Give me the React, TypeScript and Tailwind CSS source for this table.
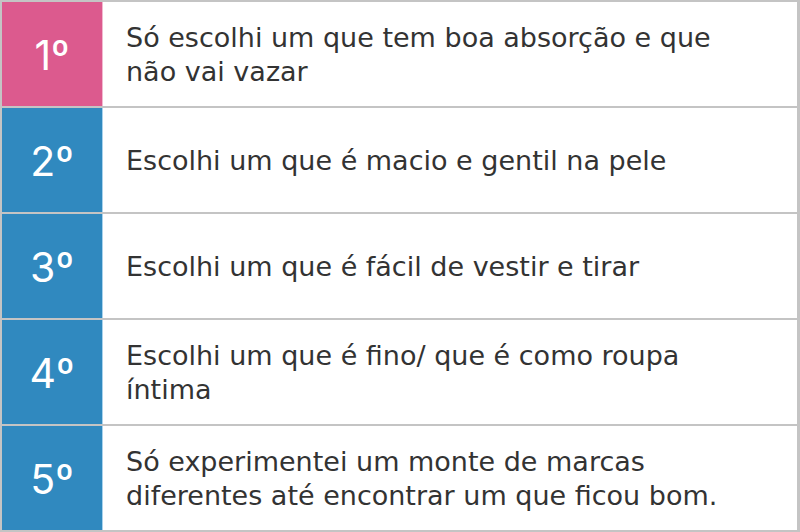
const rows = [
  { n: '1º', text: 'Só escolhi um que tem boa absorção e que não vai vazar', pink: true },
  { n: '2º', text: 'Escolhi um que é macio e gentil na pele' },
  { n: '3º', text: 'Escolhi um que é fácil de vestir e tirar' },
  { n: '4º', text: 'Escolhi um que é fino/ que é como roupa íntima' },
  { n: '5º', text: 'Só experimentei um monte de marcas diferentes até encontrar um que ficou bom.' },
];

export default function App() {
  return (
    <div className="w-[800px] h-[532px] bg-white" style={{ fontFamily: '"DejaVu Sans", sans-serif' }}>
      <div className="flex flex-col gap-[2px] bg-[#c4c4c4] p-[2px] pr-[3px] h-full">
        {rows.map((r) => (
          <div key={r.n} className="flex h-[104px] bg-white">
            <div
              className={`w-[101px] flex items-center justify-center pt-[4px] text-white text-[41px] font-['Inter',sans-serif] border-r ${
                r.pink ? 'bg-[#dc5a8e] border-[#f1b9d0]' : 'bg-[#3089bf] border-[#a9d2ec]'
              }`}
            >
              {r.n}
            </div>
            <div className="flex-1 flex items-center pl-[23px] pr-[40px] pt-[2px] text-[#333] text-[27px] leading-[34px]">
              {r.text}
            </div>
          </div>
        ))}
      </div>
    </div>
  );
}
